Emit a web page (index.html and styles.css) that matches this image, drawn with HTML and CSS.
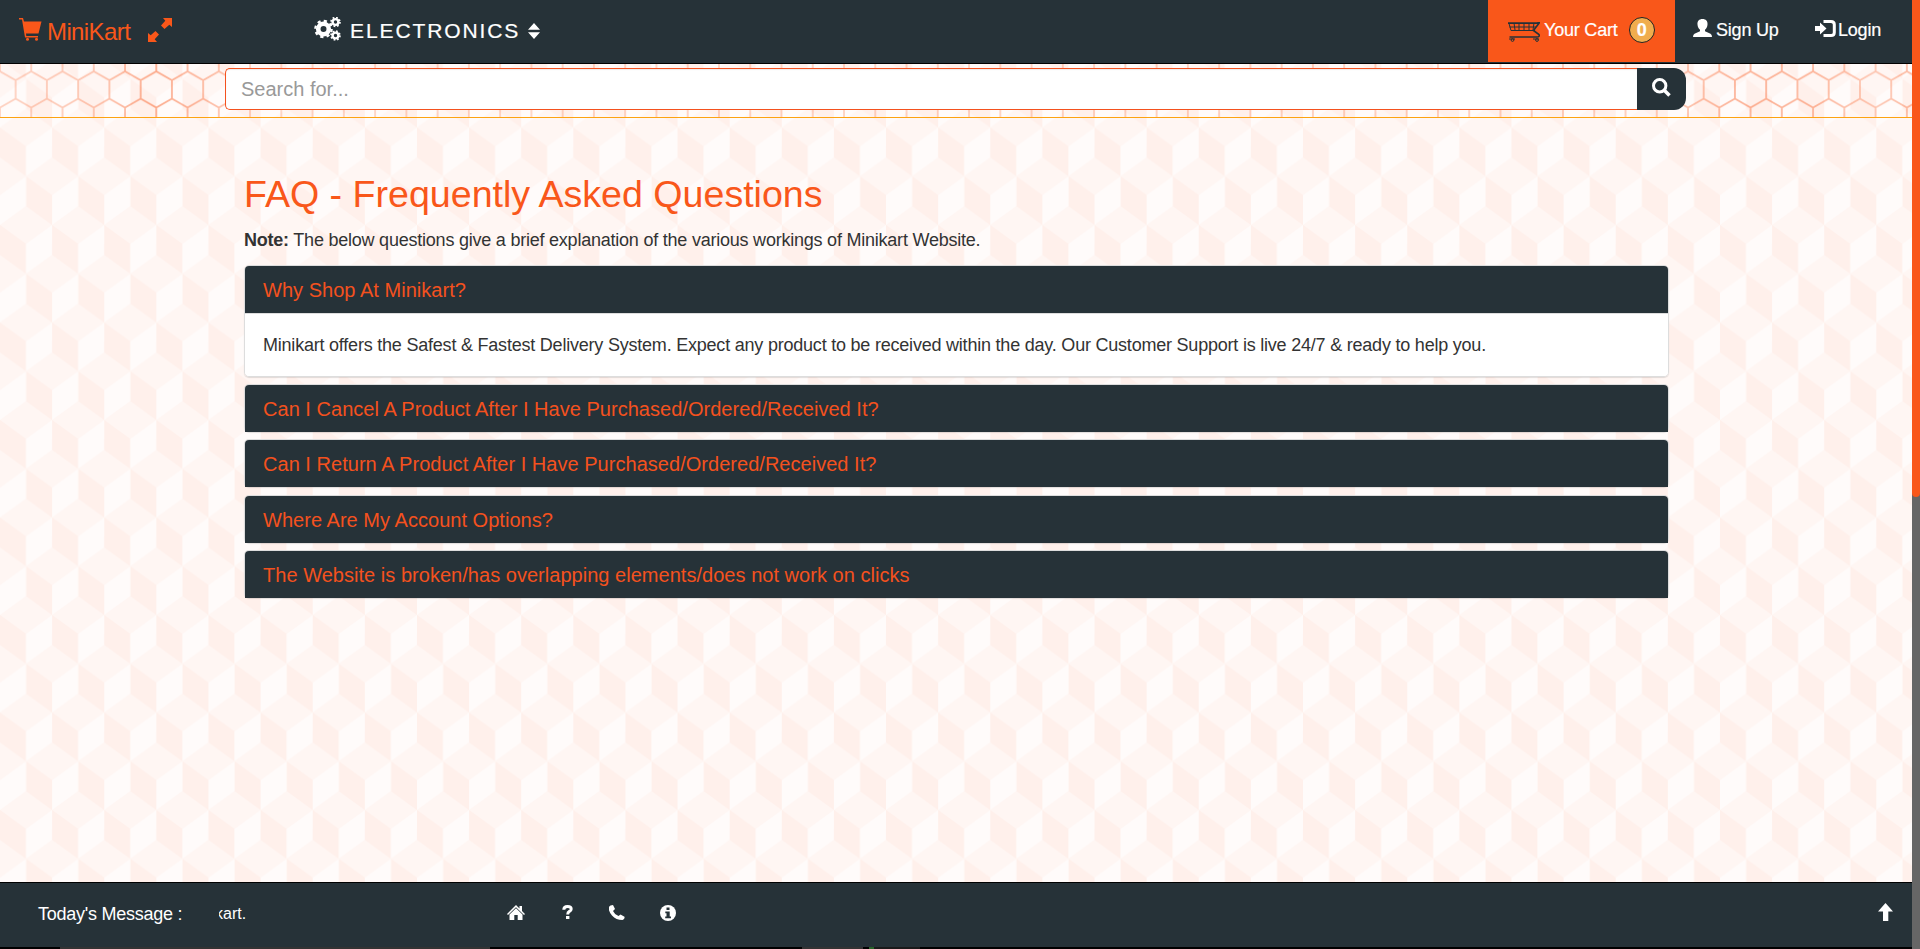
FILE: index.html
```html
<!DOCTYPE html>
<html lang="en">
<head>
<meta charset="utf-8">
<title>MiniKart - FAQ</title>
<link rel="stylesheet" href="styles.css">
</head>
<body>
<svg class="backdrop" aria-hidden="true">
  <defs>
    <pattern id="cubes" width="52.12" height="97.5" y="225" patternUnits="userSpaceOnUse">
      <rect width="53" height="98" fill="#fff6f3"/>
      <g id="faces">
        <path fill="#fff0eb" d="M0 0L26.06 19V48.75L0 29.75Z"/>
        <path fill="#fffbfa" d="M52.12 0L26.06 19V48.75L52.12 29.75Z"/>
      </g>
      <path fill="#fff0eb" d="M26.06 48.75L52.12 67.75V97.5L26.06 78.5Z"/>
      <path fill="#fffbfa" d="M26.06 48.75L0 67.75V97.5L26.06 78.5Z"/>
    </pattern>
  </defs>
  <rect width="100%" height="100%" fill="url(#cubes)"/>
</svg>

<div class="page">
  <header class="navbar">
    <a class="brand">
      <svg class="i-cart" viewBox="0 0 23 23"><path fill="currentColor" d="M0 0H4L5 3.500H22.500L19.500 15.500H7L7.300 18H19V19.500H6L3 1.500H0Z"/><circle cx="8.500" cy="21.300" r="1.500" fill="currentColor"/><circle cx="17.500" cy="21.300" r="1.500" fill="currentColor"/></svg>
      <span>MiniKart</span>
    </a>
    <svg class="i-full" viewBox="0 0 24 24"><path fill="currentColor" d="M15 0H24V9L21.300 6.700L16.500 11L13 7.500L17.300 2.700ZM9 24H0V15L2.700 17.300L7.500 13L11 16.500L6.700 21.300Z"/></svg>
    <a class="category">
      <svg class="i-gears" viewBox="0 0 27 24"><g fill="none" stroke="currentColor"><circle cx="9.500" cy="12" r="5.300" stroke-width="4.600"/><circle cx="9.500" cy="12" r="8.200" stroke-width="2.200" stroke-dasharray="3.220 3.220"/><circle cx="21.500" cy="5" r="2.900" stroke-width="2.400"/><circle cx="21.500" cy="5" r="4.400" stroke-width="1.800" stroke-dasharray="1.730 1.730"/><circle cx="21.500" cy="18.500" r="2.900" stroke-width="2.400"/><circle cx="21.500" cy="18.500" r="4.400" stroke-width="1.800" stroke-dasharray="1.730 1.730"/></g></svg>
      <span>ELECTRONICS</span>
      <svg class="i-sort" viewBox="0 0 12 16"><path fill="currentColor" d="M6 0L12 6.700H0ZM6 16L12 9.300H0Z"/></svg>
    </a>
    <nav class="account">
      <a class="cart">
        <svg class="i-trolley" viewBox="0 0 32 20"><g fill="none" stroke="currentColor" stroke-width="1.300"><path d="M0 1.500H31M1 1.500L3 8.500H27M1.500 5H28M6 1L7 8M11 1V8M16 1V8M21 1V8M26 1L25 8" stroke-width="1"/><path d="M0 1H29L31.500 0.500L25.500 8.500L31 12.500Q32 15 29 15H1.500" stroke-width="1.600"/></g><g fill="none" stroke="currentColor"><circle cx="4.500" cy="18" r="1.400"/><circle cx="29" cy="18" r="1.400"/><path d="M1 17H7M25 17H31"/></g></svg>
        <span>Your Cart</span><b class="count">0</b>
      </a>
      <a class="signup"><svg class="i-user" viewBox="0 0 19 18"><path fill="currentColor" d="M9.500 0C13 0 14.800 2.200 14.500 5.500C14.300 8 13.500 9.500 12 10.700V12.300L17.500 14.700Q19 15.500 19 18H0Q0 15.500 1.500 14.700L7 12.300V10.700C5.500 9.500 4.700 8 4.500 5.500C4.200 2.200 6 0 9.500 0Z"/></svg><span>Sign Up</span></a>
      <a class="login"><svg class="i-login" viewBox="0 0 21 17"><path fill="currentColor" d="M0 6H5V2.500L11.500 8.500L5 14.500V11H0Z"/><path fill="none" stroke="currentColor" stroke-width="3" d="M8.500 1.500H16Q19.300 1.500 19.300 4.500V12.500Q19.300 15.500 16 15.500H8.500"/></svg><span>Login</span></a>
    </nav>
  </header>

  <section class="search-band">
    <svg class="honeycomb" aria-hidden="true">
      <defs>
        <pattern id="hex" width="31.26" height="54.6" y="16.300" patternUnits="userSpaceOnUse">
          <path fill="none" stroke="#f9571a" stroke-width="1.700" d="M15.630 0V18.300L0 27.300V45.600L15.630 54.600L31.260 45.600V27.300L15.630 18.300"/>
        </pattern>
        <linearGradient id="fade"><stop offset="0" stop-color="#fff" stop-opacity=".26"/><stop offset=".05" stop-color="#fff" stop-opacity=".32"/><stop offset=".08" stop-color="#fff" stop-opacity=".5"/><stop offset=".11" stop-color="#fff" stop-opacity=".38"/><stop offset=".14" stop-color="#fff" stop-opacity=".25"/><stop offset=".87" stop-color="#fff" stop-opacity=".3"/><stop offset=".91" stop-color="#fff" stop-opacity=".45"/><stop offset=".95" stop-color="#fff" stop-opacity=".42"/><stop offset=".98" stop-color="#fff" stop-opacity=".3"/><stop offset="1" stop-color="#fff" stop-opacity=".4"/></linearGradient>
        <mask id="soft"><rect width="100%" height="100%" fill="url(#fade)"/></mask>
      </defs>
      <rect width="100%" height="100%" fill="url(#hex)" mask="url(#soft)"/>
    </svg>
    <div class="search">
      <div class="search-input">Search for...</div>
      <div class="search-button"><svg class="i-search" viewBox="0 0 19 19"><g fill="none" stroke="currentColor" stroke-width="3"><circle cx="7.700" cy="7.700" r="6.200"/><path d="M12 12L17.500 17.500" stroke-width="3.600"/></g></svg></div>
    </div>
  </section>

  <main class="content">
    <h1>FAQ - Frequently Asked Questions</h1>
    <p class="note"><b>Note:</b> The below questions give a brief explanation of the various workings of Minikart Website.</p>
    <div class="faq">
      <article class="panel open">
        <h2>Why Shop At Minikart?</h2>
        <p>Minikart offers the Safest &amp; Fastest Delivery System. Expect any product to be received within the day. Our Customer Support is live 24/7 &amp; ready to help you.</p>
      </article>
      <article class="panel"><h2>Can I Cancel A Product After I Have Purchased/Ordered/Received It?</h2></article>
      <article class="panel"><h2>Can I Return A Product After I Have Purchased/Ordered/Received It?</h2></article>
      <article class="panel"><h2>Where Are My Account Options?</h2></article>
      <article class="panel"><h2>The Website is broken/has overlapping elements/does not work on clicks</h2></article>
    </div>
  </main>

  <footer class="footer">
    <span class="message-label">Today's Message :</span>
    <div class="ticker"><span>kart.</span></div>
    <nav class="links">
      <svg class="i-home" viewBox="0 0 18 15"><path fill="currentColor" d="M9 0L12.500 3.500V1H15V6L18 9L17 10L9 2.300L1 10L0 9ZM9 3.200L15.500 9.500V15H10.700V10H7.300V15H2.500V9.500Z"/></svg>
      <svg class="i-help" viewBox="0 0 11 14"><path fill="none" stroke="currentColor" stroke-width="3" d="M1.800 4.700Q1.800 1.500 5.500 1.500Q9.200 1.500 9.200 4Q9.200 5.700 7.300 6.500Q5.700 7.200 5.700 9.500"/><path fill="currentColor" d="M4 11H7.400V14H4Z"/></svg>
      <svg class="i-phone" viewBox="0 0 16 15"><path fill="currentColor" d="M1.500 .5L4 0L6 4L4 6Q5.500 9.500 9.500 11L11.500 9.500L15.500 11.700Q16 14 13.500 15Q7 15 3 10.500Q-1.500 5 .3 1.500Z"/></svg>
      <svg class="i-info" viewBox="0 0 16 16"><circle cx="8" cy="8" r="8" fill="currentColor"/><path fill="#263238" d="M6.500 2.500H9.500V5H6.500ZM5.300 6.500H9.700V11.500H11V13.300H5.200V11.500H6.500V8.200H5.300Z"/></svg>
    </nav>
    <svg class="i-up" viewBox="0 0 15 18"><path fill="currentColor" d="M7.500 0L15 8.500H10.300V18H5V8.500H0Z"/></svg>
  </footer>
  <div class="taskbar"><i class="chip wide"></i><i class="chip mid"></i><i class="chip green"></i><i class="chip dim"></i></div>
</div>
<div class="scrollbar"><div class="thumb"></div></div>
</body>
</html>
```

FILE: styles.css
```css
* { box-sizing: border-box; }

body {
  margin: 0;
  height: 949px;
  overflow: hidden;
  display: flex;
  font-family: "Liberation Sans", Arial, sans-serif;
  font-size: 18px;
  line-height: 26px;
  color: #333;
  background: #fff6f3;
}

svg { display: block; flex: none; }
h1, h2, p { margin: 0; font-weight: 400; }

.backdrop { position: absolute; inset: 0; width: 100%; height: 100%; }
.page { position: relative; flex: 1; display: flex; flex-direction: column; }

.navbar {
  height: 64px;
  display: flex;
  align-items: flex-start;
  padding-left: 19px;
  background: #263238;
  border-bottom: 1px solid #000;
  color: #fff;
}
.brand { display: flex; width: 129px; padding-top: 18px; gap: 5px; color: #f9571a; font-size: 24px; letter-spacing: -.6px; }
.i-cart { width: 23px; height: 23px; }
.brand span { line-height: 28px; }
.i-full { width: 24px; height: 24px; margin-top: 18px; color: #f9571a; }
.category { display: flex; margin-left: 142px; padding-top: 17px; font-size: 21px; letter-spacing: 1.9px; }
.i-gears { width: 27px; height: 24px; }
.category span { margin-left: 9px; line-height: 28px; -webkit-text-stroke: .2px #fff; }
.i-sort { width: 12px; height: 16px; margin: 6px 0 0 8px; }

.account { display: flex; margin-left: auto; }
.account a { display: flex; height: 62px; padding-top: 17px; letter-spacing: -.2px; -webkit-text-stroke: .2px #fff; }
.account .cart { width: 187px; padding-left: 20px; background: #f9571a; }
.i-trolley { width: 32px; height: 20px; margin: 5px 4px 0 0; color: #263238; }
.count { width: 26px; height: 26px; margin-left: 11px; border: 1px solid #222; border-radius: 50%; background: #f0ad4e; text-align: center; line-height: 25px; }
.account .signup { width: 122px; padding-left: 18px; }
.i-user { width: 19px; height: 18px; margin: 2px 4px 0 0; }
.account .login { width: 115px; padding-left: 18px; }
.i-login { width: 21px; height: 17px; margin: 3px 2px 0 0; }

.search-band { position: relative; height: 54px; padding: 4px 226px 0 225px; border-bottom: 1px solid #fca311; }
.honeycomb { position: absolute; inset: 0; width: 100%; height: 100%; }
.search { position: relative; display: flex; height: 42px; }
.search-input { flex: 1; padding: 7px 15px; border: 1px solid #f4511e; border-right: 0; border-radius: 5px 0 0 5px; background: #fff; color: #999; font-size: 20px; box-shadow: inset 0 1px 1px rgba(0,0,0,.08); }
.search-button { width: 49px; padding: 10px 0 0 15px; border-radius: 0 12px 12px 0; background: #263238; color: #fff; }
.i-search { width: 19px; height: 19px; }

.content { flex: 1; padding: 54px 243px 0 244px; }
h1 { color: #f9571a; font-size: 37.6px; line-height: 44px; }
.note { margin-top: 11px; letter-spacing: -.225px; }
.faq { display: flex; flex-direction: column; gap: 7.2px; margin-top: 12px; }
.panel { border: 1px solid #ddd; border-bottom: 0; border-radius: 5px; box-shadow: 0 1px 1px rgba(0,0,0,.12); }
.open { border-bottom: 1px solid #ddd; }
.panel h2 { height: 47px; padding: 10px 18px; border-radius: 4px 4px 0 0; background: #263238; color: #f4511e; font-size: 20px; line-height: 28px; letter-spacing: .03px; }
.panel p { height: 63px; padding: 18px 18px; border-top: 1px solid #ddd; border-radius: 0 0 4px 4px; background: #fff; letter-spacing: -.215px; }

.footer { height: 65px; display: flex; padding: 18px 19px 0 38px; border-top: 1px solid #000; background: #263238; color: #fff; }
.message-label { width: 181px; letter-spacing: -.25px; }
.ticker { display: flex; width: 288px; overflow: hidden; font-size: 16px; }
.ticker span { margin-left: -4px; }
.links { display: flex; align-items: flex-start; padding-top: 4px; }
.i-home { width: 18px; height: 15px; }
.i-help { width: 11px; height: 14px; margin: 0 0 0 37px; }
.i-phone { width: 16px; height: 15px; margin-left: 36px; }
.i-info { width: 16px; height: 16px; margin-left: 35px; }
.i-up { width: 15px; height: 18px; margin: 2px 0 0 auto; }

.taskbar { display: flex; height: 2px; background: #000; }
.chip { height: 2px; background: #333; }
.wide { width: 430px; margin-left: 60px; }
.mid { width: 61px; margin-left: 312px; }
.green { width: 5px; margin-left: 6px; background: #28632a; }
.dim { width: 46px; background: #1a1a1a; }

.scrollbar { position: relative; width: 8px; background: #666; }
.thumb { height: 497px; border-radius: 0 0 4px 4px; background: #f9571a; }
```
